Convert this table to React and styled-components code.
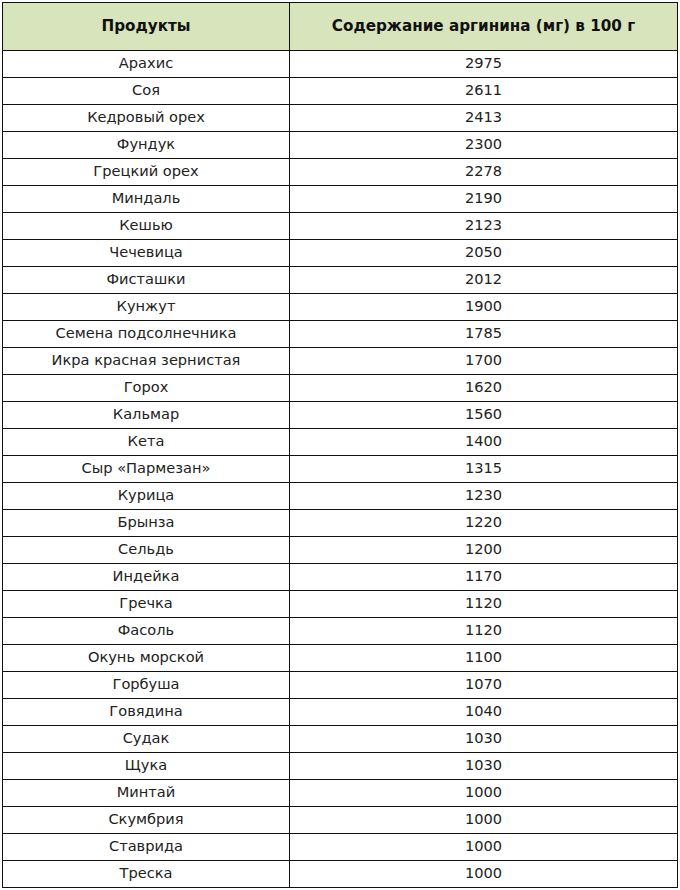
import styled, { createGlobalStyle } from "styled-components";

const GlobalStyle = createGlobalStyle`
  html, body {
    margin: 0;
    padding: 0;
    background: #fff;
  }
  body {
    font-family: "DejaVu Sans", Verdana, sans-serif;
    color: #1a1a1a;
  }
`;

const Page = styled.div`
  padding: 2px 2px 0 2px;
`;

const Table = styled.table`
  width: 676px;
  border-collapse: collapse;
  table-layout: fixed;
`;

const HeadCell = styled.th`
  background: #d8e4bc;
  border: 1px solid #111;
  height: 45px;
  padding: 0 0 2px 0;
  font-weight: bold;
  font-size: 15.2px;
  color: #111;
  text-align: center;
  width: ${(p) => p.$w || "auto"};
`;

const Cell = styled.td`
  border: 1px solid #111;
  height: 24px;
  padding: 0 0 2px 0;
  text-align: center;
  vertical-align: middle;
  font-size: 14.6px;
  line-height: 18px;
  color: #222;
`;

const rows = [
  ["Арахис", 2975],
  ["Соя", 2611],
  ["Кедровый орех", 2413],
  ["Фундук", 2300],
  ["Грецкий орех", 2278],
  ["Миндаль", 2190],
  ["Кешью", 2123],
  ["Чечевица", 2050],
  ["Фисташки", 2012],
  ["Кунжут", 1900],
  ["Семена подсолнечника", 1785],
  ["Икра красная зернистая", 1700],
  ["Горох", 1620],
  ["Кальмар", 1560],
  ["Кета", 1400],
  ["Сыр «Пармезан»", 1315],
  ["Курица", 1230],
  ["Брынза", 1220],
  ["Сельдь", 1200],
  ["Индейка", 1170],
  ["Гречка", 1120],
  ["Фасоль", 1120],
  ["Окунь морской", 1100],
  ["Горбуша", 1070],
  ["Говядина", 1040],
  ["Судак", 1030],
  ["Щука", 1030],
  ["Минтай", 1000],
  ["Скумбрия", 1000],
  ["Ставрида", 1000],
  ["Треска", 1000],
];

export default function App() {
  return (
    <Page>
      <GlobalStyle />
      <Table>
        <thead>
          <tr>
            <HeadCell $w="286px">Продукты</HeadCell>
            <HeadCell>Содержание аргинина (мг) в 100 г</HeadCell>
          </tr>
        </thead>
        <tbody>
          {rows.map(([name, value]) => (
            <tr key={name}>
              <Cell>{name}</Cell>
              <Cell>{value}</Cell>
            </tr>
          ))}
        </tbody>
      </Table>
    </Page>
  );
}
